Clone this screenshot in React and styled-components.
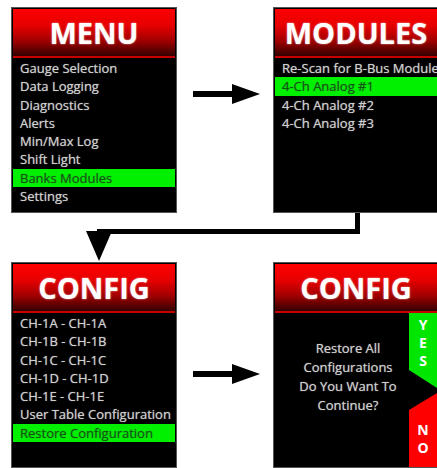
import React from "react";
import styled, { createGlobalStyle } from "styled-components";

const GlobalStyle = createGlobalStyle`
  html, body {
    margin: 0;
    background: #fff;
    overflow: hidden;
  }
  body {
    width: 437px;
    height: 468px;
    font-family: "Open Sans", "Liberation Sans", sans-serif;
  }
`;

const Board = styled.div`
  display: grid;
  grid-template-columns: 166px 96px 166px;
  grid-template-rows: 206px 49px 206px;
  padding: 7px 0 0 11px;
`;

const Screen = styled.div`
  display: flex;
  flex-direction: column;
  box-sizing: border-box;
  height: 206px;
  border: 1px solid #555;
  padding: 1px;
  background: #000;
  overflow: hidden;
`;

const Header = styled.div`
  flex: none;
  height: 47px;
  border-bottom: 2px solid #c80000;
  background: linear-gradient(#ff0000 0%, #e60000 35%, #a00000 68%, #330000 100%);
  display: flex;
  align-items: center;
  justify-content: center;
  color: #fff;
  font-weight: 700;
  font-size: 29px;
  white-space: nowrap;
  text-shadow: 0 0 2px rgba(255, 255, 255, 0.7);
`;

const List = styled.div`
  display: flex;
  flex-direction: column;
  padding-top: 1px;
`;

const Item = styled.div`
  height: 18.3px;
  line-height: 18.3px;
  padding-left: 7px;
  font-size: 13px;
  white-space: nowrap;
  color: ${(p) => (p.$active ? "#0b5a0b" : "#cfcfcf")};
  background: ${(p) => (p.$active ? "#00f000" : "transparent")};
  text-shadow: ${(p) => (p.$active ? "0 0 1px #3a7a3a" : "0 0 1px #999")};
`;

const ArrowCell = styled.div`
  padding-top: ${(p) => p.$top}px;
`;

const Connector = styled.svg`
  grid-column: 1 / -1;
  display: block;
  overflow: visible;
`;

const ConfirmBody = styled.div`
  flex: 1;
  display: flex;
  min-height: 0;
`;

const Message = styled.div`
  flex: 1;
  padding: 26px 0 0 12px;
  text-align: center;
  font-size: 13px;
  line-height: 19px;
  color: #cfcfcf;
  text-shadow: 0 0 1px #999;
`;

const Choices = styled.div`
  width: 28px;
  display: flex;
  flex-direction: column;
  gap: 5px;
`;

const Choice = styled.div`
  display: flex;
  flex-direction: column;
  align-items: center;
  color: #fff;
  font-weight: 700;
  font-size: 14px;
  line-height: 18px;
  background: ${(p) => p.$color};
  clip-path: ${(p) => p.$clip};
  padding-top: ${(p) => p.$pad}px;
  box-sizing: border-box;
  flex: ${(p) => p.$flex};
`;

const Arrow = () => (
  <svg width="96" height="20" viewBox="0 0 96 20">
    <rect x="16" y="7" width="40" height="6" fill="#000" />
    <polygon points="55,0 83,10 55,20" fill="#000" />
  </svg>
);

const MenuScreen = ({ title, items, active }) => (
  <Screen>
    <Header>{title}</Header>
    <List>
      {items.map((label) => (
        <Item key={label} $active={label === active}>
          {label}
        </Item>
      ))}
    </List>
  </Screen>
);

const App = () => {
  return (
    <>
      <GlobalStyle />
      <Board>
        <MenuScreen
          title="MENU"
          active="Banks Modules"
          items={[
            "Gauge Selection",
            "Data Logging",
            "Diagnostics",
            "Alerts",
            "Min/Max Log",
            "Shift Light",
            "Banks Modules",
            "Settings",
          ]}
        />
        <ArrowCell $top={77}>
          <Arrow />
        </ArrowCell>
        <MenuScreen
          title="MODULES"
          active="4-Ch Analog #1"
          items={[
            "Re-Scan for B-Bus Modules",
            "4-Ch Analog #1",
            "4-Ch Analog #2",
            "4-Ch Analog #3",
          ]}
        />

        <Connector width="426" height="49" viewBox="0 0 426 49">
          <rect x="344" y="0" width="5" height="21" fill="#000" />
          <rect x="86" y="16" width="263" height="5" fill="#000" />
          <polygon points="75,18 101,18 88,48" fill="#000" />
        </Connector>

        <MenuScreen
          title="CONFIG"
          active="Restore Configuration"
          items={[
            "CH-1A - CH-1A",
            "CH-1B - CH-1B",
            "CH-1C - CH-1C",
            "CH-1D - CH-1D",
            "CH-1E - CH-1E",
            "User Table Configuration",
            "Restore Configuration",
          ]}
        />
        <ArrowCell $top={102}>
          <Arrow />
        </ArrowCell>
        <Screen>
          <Header>CONFIG</Header>
          <ConfirmBody>
            <Message>
              Restore All
              <br />
              Configurations
              <br />
              Do You Want To
              <br />
              Continue?
            </Message>
            <Choices>
              <Choice
                $color="#00e600"
                $pad={3}
                $flex="0 0 75px"
                $clip="polygon(0 0, 100% 0, 100% 100%, 0 76%)"
              >
                <span>Y</span>
                <span>E</span>
                <span>S</span>
              </Choice>
              <Choice
                $color="#ff0000"
                $pad={28}
                $flex="1 0 80px"
                $clip="polygon(100% 0, 100% 100%, 0 100%, 0 17px)"
              >
                <span>N</span>
                <span>O</span>
              </Choice>
            </Choices>
          </ConfirmBody>
        </Screen>
      </Board>
    </>
  );
};

export default App;
